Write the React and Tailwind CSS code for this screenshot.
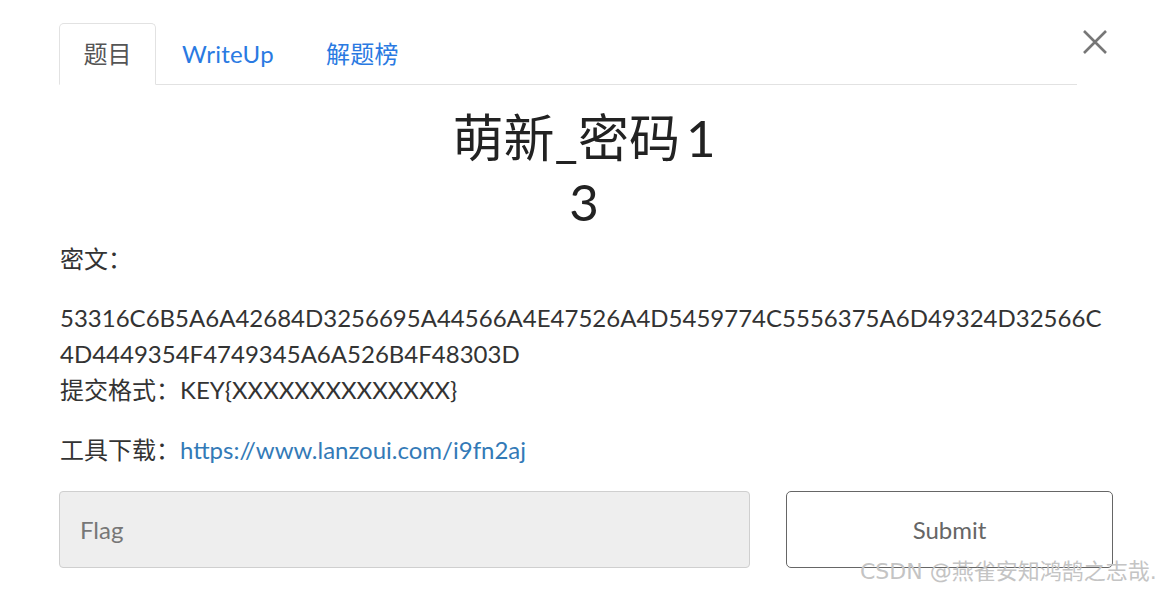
import React from "react";

const font = { fontFamily: 'Lato, "Noto Sans CJK SC", sans-serif' };

const tabs = [
  { label: "题目", active: true },
  { label: "WriteUp" },
  { label: "解题榜" },
];

const App = () => {
  return (
    <div
      className="relative w-[1160px] h-[590px] bg-white overflow-hidden text-[#333]"
      style={font}
    >
      {/* Header / tabs */}
      <div className="flex items-start pt-[23px] pl-[59px]">
        <ul className="flex w-[1018px] border-b border-[#e2e2e2]">
          {tabs.map((tab) => (
            <li
              key={tab.label}
              className={
                tab.active
                  ? "-mb-px h-[62px] w-[97px] justify-center flex items-center text-[24px] text-[#555] bg-white border border-[#e2e2e2] border-b-white rounded-t-[5px]"
                  : "-mb-px h-[62px] px-[25px] flex items-center text-[24px] tracking-[0.3px] text-[#2a7ae2] border border-transparent"
              }
            >
              {tab.label}
            </li>
          ))}
        </ul>
        <button className="ml-[5px] mt-[6px] w-[26px] h-[26px] text-[#777]">
          <svg viewBox="0 0 26 26" width="26" height="26">
            <path
              d="M2 2 L24 24 M24 2 L2 24"
              stroke="currentColor"
              strokeWidth="2.6"
              fill="none"
            />
          </svg>
        </button>
      </div>

      {/* Title */}
      <h1 className="mt-[21px] pl-[8px] text-center text-[51px] leading-[64px] text-[#222] font-normal">
        萌新_密码<span className="ml-[6px]">1</span>
        <br />3
      </h1>

      {/* Body */}
      <div className="pl-[60px] pr-[20px] pt-[7px] text-[24px] leading-[36px]">
        <p className="mb-[23px]">密文：</p>
        <p className="mb-[24px] whitespace-nowrap">
          53316C6B5A6A42684D3256695A44566A4E47526A4D5459774C5556375A6D49324D32566C
          <br />
          4D4449354F4749345A6A526B4F48303D
          <br />
          提交格式：KEY{"{"}XXXXXXXXXXXXXX{"}"}
        </p>
        <p>
          工具下载：
          <a className="text-[#337ab7]">https://www.lanzoui.com/i9fn2aj</a>
        </p>
      </div>

      {/* Flag form */}
      <div className="flex pl-[59px] mt-[23px]">
        <div className="w-[691px] h-[77px] flex items-center px-[20px] bg-[#eeeeee] border border-[#cfcfcf] rounded-[4px] text-[24px] text-[#777]">
          Flag
        </div>
        <button className="ml-[36px] w-[327px] h-[77px] border border-[#666] rounded-[5px] text-[24px] text-[#666] bg-white">
          Submit
        </button>
      </div>

      {/* Watermark */}
      <div
        className="absolute left-[860px] top-[555px] text-[22px] text-[#c4c4c4] whitespace-nowrap"
        style={{ fontFamily: '"DejaVu Sans", "Noto Sans CJK SC", sans-serif' }}
      >
        CSDN @燕雀安知鸿鹄之志哉.
      </div>
    </div>
  );
};

export default App;
